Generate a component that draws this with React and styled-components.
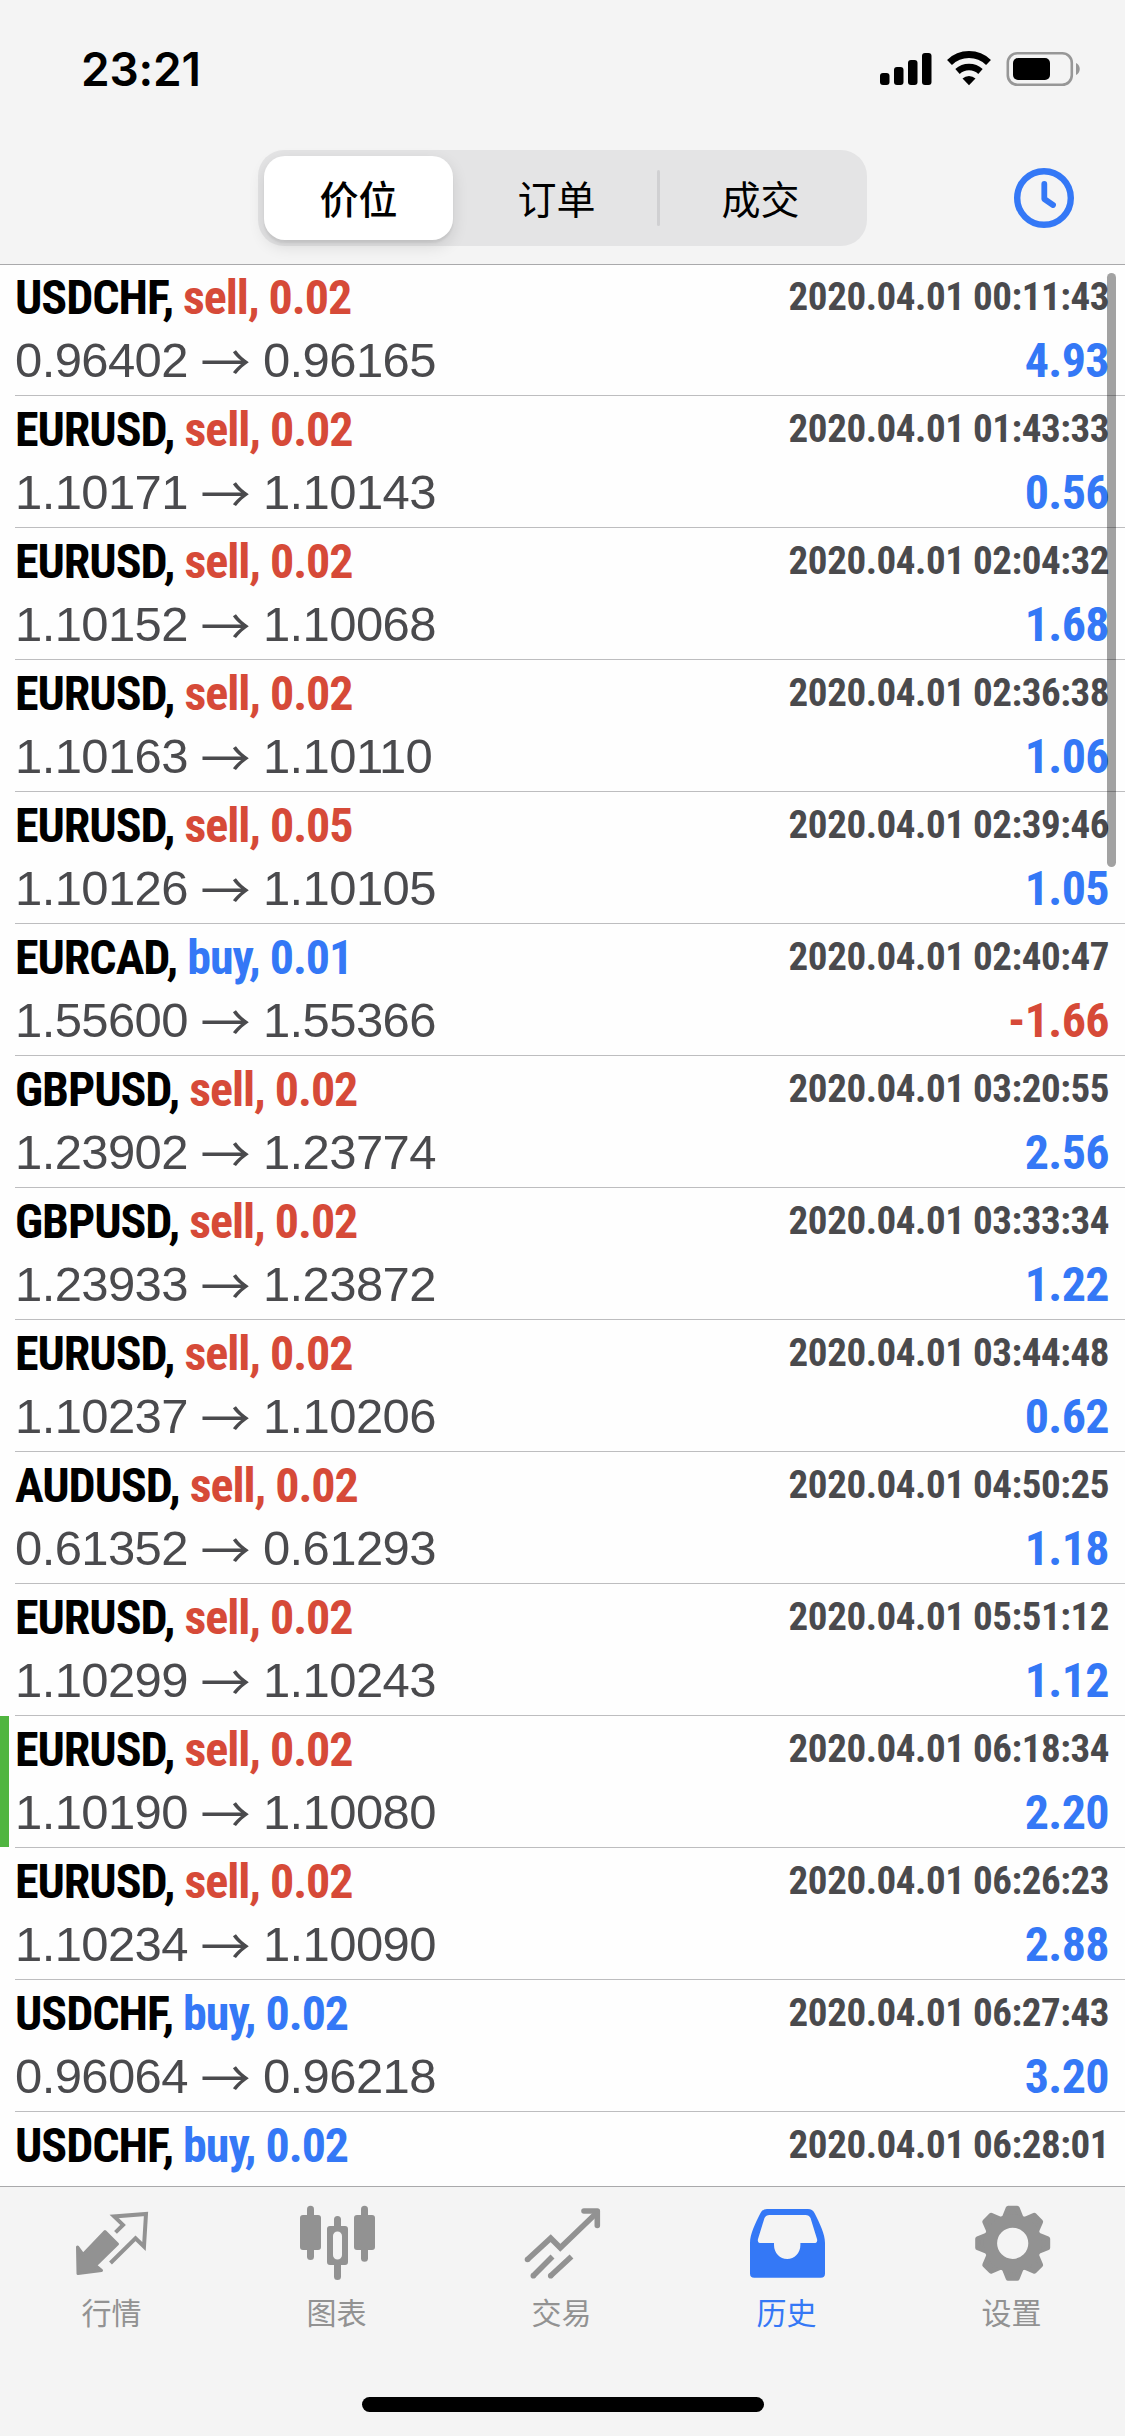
import React, { useState } from "react";
import styled, { createGlobalStyle } from "styled-components";

const BLUE = "#3478f6";
const RED = "#d64a38";
const GREY = "#929292";

const GlobalStyle = createGlobalStyle`
* { box-sizing: border-box; }
body {
  margin: 0;
  background: #fff;
  font-family: "Liberation Sans", "Noto Sans CJK SC", sans-serif;
}
`;

const Screen = styled.div`
  position: relative;
  display: flex;
  flex-direction: column;
  width: 1125px;
  height: 2436px;
  overflow: hidden;
  background: #fefefe;
`;

const Header = styled.header`
  flex: none;
  height: 265px;
  background: #f4f4f4;
  border-bottom: 1px solid #a9a9ab;
`;

const StatusBar = styled.div`
  display: flex;
  justify-content: space-between;
  align-items: center;
  height: 138px;
  padding: 0 43px 0 81px;
`;

const Clock = styled.div`
  font-family: Inter, sans-serif;
  font-size: 46px;
  font-weight: 600;
  line-height: 46px;
  letter-spacing: -0.2px;
`;

const NavBar = styled.div`
  display: flex;
  align-items: center;
  justify-content: flex-end;
  gap: 144px;
  height: 120px;
  padding-right: 48px;
`;

const Segments = styled.div`
  display: flex;
  align-items: center;
  width: 609px;
  height: 96px;
  padding: 0 6px;
  border-radius: 26px;
  background: #e4e4e5;
`;

const Segment = styled.button`
  width: ${(p) => (p.$active ? 189 : 204)}px;
  flex: ${(p) => (p.$active ? "none" : 1)};
  height: 84px;
  padding: 0 0 3px;
  border: 0;
  border-radius: 21px;
  background: ${(p) => (p.$active ? "#fff" : "transparent")};
  box-shadow: ${(p) => (p.$active ? "0 6px 16px rgba(0, 0, 0, 0.12), 0 3px 2px rgba(0, 0, 0, 0.06)" : "none")};
  color: #000;
  font-family: "Noto Sans CJK SC", sans-serif;
  font-size: 39px;
  font-weight: ${(p) => (p.$active ? 500 : 400)};
  line-height: 60px;
`;

const Divider = styled.span`
  width: 3px;
  height: 56px;
  border-radius: 2px;
  background: ${(p) => (p.$hidden ? "transparent" : "#d0d0d2")};
`;

const List = styled.main`
  flex: 1;
  min-height: 0;
  overflow: hidden;
`;

const Row = styled.div`
  display: flex;
  height: 132px;

  &:first-child {
    height: 131px;
  }
`;

const Marker = styled.div`
  flex: none;
  width: 9px;
  height: 131px;
  margin-right: 6px;
  background: ${(p) => (p.$on ? "#50b540" : "transparent")};
`;

const RowBody = styled.div`
  flex: 1;
  display: flex;
  flex-direction: column;
  justify-content: flex-end;
  padding: 0 16px 3px 0;
  border-bottom: 1px solid #bdbdbf;
`;

const Line = styled.div`
  display: flex;
  justify-content: space-between;
  align-items: center;
  height: 63px;
  white-space: nowrap;
`;

const Symbol = styled.div`
  font-family: "Roboto Condensed", Roboto, sans-serif;
  font-size: 48px;
  font-weight: 700;
  line-height: 63px;
  letter-spacing: -1.05px;
  color: #000;
`;

const Side = styled.span`
  color: ${(p) => (p.$side === "buy" ? BLUE : RED)};
`;

const Time = styled.div`
  font-family: "Roboto Condensed", Roboto, sans-serif;
  font-size: 39px;
  font-weight: 700;
  line-height: 63px;
  letter-spacing: -0.45px;
  color: #4a4a4d;
`;

const Prices = styled.div`
  display: flex;
  align-items: center;
  font-size: 49px;
  line-height: 63px;
  letter-spacing: -0.6px;
  color: #4a4a4d;
`;

const Arrow = styled.span`
  width: 75px;
  padding-bottom: 4px;
  text-align: center;
  letter-spacing: 0;
  font-family: "Noto Sans CJK SC", sans-serif;
  font-size: 50px;
  line-height: 56px;
`;

const Profit = styled.div`
  font-family: "Roboto Condensed", Roboto, sans-serif;
  font-size: 48px;
  font-weight: 700;
  line-height: 63px;
  letter-spacing: -0.6px;
  color: ${(p) => (p.$loss ? RED : BLUE)};
`;

const ScrollThumb = styled.div`
  position: absolute;
  top: 273px;
  right: 9px;
  width: 9px;
  height: 594px;
  border-radius: 5px;
  background: rgba(0, 0, 0, 0.36);
`;

const TabBar = styled.nav`
  flex: none;
  height: 250px;
  border-top: 1px solid #a9a9ab;
  background: #f4f4f4;
`;

const Tabs = styled.div`
  display: flex;
  width: 1125px;
  height: 210px;
  padding-top: 16px;
  margin-left: -1px;
`;

const Tab = styled.button`
  flex: 1;
  display: flex;
  flex-direction: column;
  align-items: center;
  padding: 0;
  border: 0;
  background: none;
  color: ${(p) => (p.$active ? BLUE : GREY)};
  font-family: "Noto Sans CJK SC", sans-serif;
  font-size: 30px;
  line-height: 40px;

  svg {
    margin-bottom: 8px;
  }
`;

const HomeIndicator = styled.div`
  width: 402px;
  height: 15px;
  margin: 0 auto;
  border-radius: 8px;
  background: #000;
`;

const StatusIcons = () => (
  <svg width="204" height="40" viewBox="880 49 204 40">
    <rect x="882" y="73" width="9.5" height="12" rx="3" />
    <rect x="896" y="67" width="9.5" height="18" rx="3" />
    <rect x="910" y="60" width="9.5" height="25" rx="3" />
    <rect x="924" y="53" width="9.5" height="32" rx="3" />
    <path d="M951.5 62.5a28 28 0 0 1 39 0" fill="none" stroke="#000" strokeWidth="7" />
    <path d="M959.5 71.5a17 17 0 0 1 23 0" fill="none" stroke="#000" strokeWidth="6.5" />
    <path d="M964.5 78.5a9.5 9.5 0 0 1 13 0L971 85.2z" />
    <rect x="1009.8" y="53.2" width="64" height="31.6" rx="9.5" fill="none" stroke="#979797" strokeWidth="2.6" />
    <rect x="1015" y="58" width="37" height="22" rx="5" />
    <path d="M1078 63c5 2 5 10 0 12z" fill="#979797" />
  </svg>
);

const HistoryClock = () => (
  <svg width="66" height="66" viewBox="0 0 66 66" fill="none" stroke={BLUE} strokeLinecap="round" strokeLinejoin="round">
    <circle cx="33" cy="33" r="26.8" strokeWidth="6.4" />
    <path d="M33.3 19v15l8.7 6" strokeWidth="5.8" />
  </svg>
);

const QuotesIcon = () => (
  <svg width="80" height="80" viewBox="0 0 80 80" stroke="currentColor" strokeLinejoin="round" strokeLinecap="round">
    <path d="M33 28.5l12.5 12.5-22 21.5 6 5L6 70.5 5.5 44l5.5 7.5z" fill="currentColor" strokeWidth="3" />
    <path d="M43.5 29.3l7.5-7.4-8.8-8.4L74 11l-2 32.5-8.5-8.2L38.5 60" fill="none" strokeWidth="4" strokeLinejoin="miter" strokeLinecap="butt" />
  </svg>
);

const ChartIcon = () => (
  <svg width="80" height="80" viewBox="0 0 80 80" fill="currentColor">
    <rect x="10" y="2.7" width="7" height="54.3" rx="3.5" />
    <rect x="3" y="12" width="21" height="35" rx="3" />
    <rect x="64" y="2.7" width="7" height="56" rx="3.5" />
    <rect x="57" y="12" width="21" height="35" rx="3" />
    <path
      fillRule="evenodd"
      d="M33 23h4v-6.500a3.500 3.500 0 0 1 7 0V23h4a3 3 0 0 1 3 3v33a3 3 0 0 1-3 3h-4v11.500a3.500 3.500 0 0 1-7 0V62h-4a3 3 0 0 1-3-3V26a3 3 0 0 1 3-3zM40.500 28.500a4.500 4.500 0 0 0-4.500 4.500v19a4.500 4.500 0 0 0 9 0V33a4.500 4.500 0 0 0-4.500-4.500z"
    />
  </svg>
);

const TradeIcon = () => (
  <svg width="80" height="80" viewBox="0 0 80 80" fill="none" stroke="currentColor" strokeWidth="5.6">
    <path d="M5.500 56.500L28.700 35.200l9.600 9.600L75 9.500" />
    <path d="M62 8h13.300v14.500" strokeLinecap="round" strokeLinejoin="round" />
    <path d="M11.300 72.700L30.500 53.500M28.700 72.700L49.500 53.500" />
    <g fill="currentColor" stroke="none">
      <circle cx="5.500" cy="56.500" r="2.800" />
      <circle cx="11.300" cy="72.700" r="2.800" />
      <circle cx="28.700" cy="72.700" r="2.800" />
    </g>
  </svg>
);

const HistoryIcon = () => (
  <svg width="80" height="80" viewBox="0 0 80 80" fill="currentColor">
    <path
      fillRule="evenodd"
      d="M20 6h41q4.500 0 6.500 4C73 21 78 31 78 40v30.500q0 4.300-4.300 4.300H7.300Q3 74.800 3 70.500V40C3 31 8 21 13.500 10q2-4 6.500-4zM22.500 12q-3.500 0-5 3L11 36q-1 4 3 4h13v2c0 8 6 14 13.200 14s13.200-6 13.200-14v-2H67q4 0 3-4l-6.500-21q-1.500-3-5-3z"
    />
  </svg>
);

const SettingsIcon = () => (
  <svg width="80" height="80" viewBox="-40.700 -40.300 80 80">
    <g fill="currentColor" stroke="currentColor" strokeWidth="5" strokeLinejoin="round">
      {[0, 45, 90, 135, 180, 225, 270, 315].map((deg) => (
        <path key={deg} transform={`rotate(${deg})`} d="M-8.500-25L-4.500-35h9L8.500-25z" />
      ))}
    </g>
    <circle r="22.300" fill="none" stroke="currentColor" strokeWidth="13.400" />
  </svg>
);

const segments = ["价位", "订单", "成交"];

const tabs = [
  { label: "行情", Icon: QuotesIcon },
  { label: "图表", Icon: ChartIcon },
  { label: "交易", Icon: TradeIcon },
  { label: "历史", Icon: HistoryIcon },
  { label: "设置", Icon: SettingsIcon },
];

const deals = [
  ["USDCHF", "sell", "0.02", "0.96402", "0.96165", "00:11:43", "4.93"],
  ["EURUSD", "sell", "0.02", "1.10171", "1.10143", "01:43:33", "0.56"],
  ["EURUSD", "sell", "0.02", "1.10152", "1.10068", "02:04:32", "1.68"],
  ["EURUSD", "sell", "0.02", "1.10163", "1.10110", "02:36:38", "1.06"],
  ["EURUSD", "sell", "0.05", "1.10126", "1.10105", "02:39:46", "1.05"],
  ["EURCAD", "buy", "0.01", "1.55600", "1.55366", "02:40:47", "-1.66"],
  ["GBPUSD", "sell", "0.02", "1.23902", "1.23774", "03:20:55", "2.56"],
  ["GBPUSD", "sell", "0.02", "1.23933", "1.23872", "03:33:34", "1.22"],
  ["EURUSD", "sell", "0.02", "1.10237", "1.10206", "03:44:48", "0.62"],
  ["AUDUSD", "sell", "0.02", "0.61352", "0.61293", "04:50:25", "1.18"],
  ["EURUSD", "sell", "0.02", "1.10299", "1.10243", "05:51:12", "1.12"],
  ["EURUSD", "sell", "0.02", "1.10190", "1.10080", "06:18:34", "2.20", true],
  ["EURUSD", "sell", "0.02", "1.10234", "1.10090", "06:26:23", "2.88"],
  ["USDCHF", "buy", "0.02", "0.96064", "0.96218", "06:27:43", "3.20"],
  ["USDCHF", "buy", "0.02", "", "", "06:28:01", ""],
];

function Deal({ deal }) {
  const [symbol, side, volume, open, close, time, profit, marked] = deal;

  return (
    <Row>
      <Marker $on={marked} />
      <RowBody>
        <Line>
          <Symbol>
            {symbol}, <Side $side={side}>{side}, {volume}</Side>
          </Symbol>
          <Time>2020.04.01 {time}</Time>
        </Line>
        <Line>
          {open && (
            <>
              <Prices>
                {open}
                <Arrow>→</Arrow>
                {close}
              </Prices>
              <Profit $loss={profit.startsWith("-")}>{profit}</Profit>
            </>
          )}
        </Line>
      </RowBody>
    </Row>
  );
}

function App() {
  const [segment, setSegment] = useState(0);
  const [tab, setTab] = useState(3);

  return (
    <>
      <GlobalStyle />
      <Screen>
        <Header>
          <StatusBar>
            <Clock>23:21</Clock>
            <StatusIcons />
          </StatusBar>
          <NavBar>
            <Segments>
              {segments.map((label, i) => (
                <React.Fragment key={label}>
                  {i > 0 && <Divider $hidden={segment === i || segment === i - 1} />}
                  <Segment $active={segment === i} onClick={() => setSegment(i)}>
                    {label}
                  </Segment>
                </React.Fragment>
              ))}
            </Segments>
            <HistoryClock />
          </NavBar>
        </Header>
        <List>
          {deals.map((deal) => (
            <Deal key={deal[5]} deal={deal} />
          ))}
        </List>
        <ScrollThumb />
        <TabBar>
          <Tabs>
            {tabs.map(({ label, Icon }, i) => (
              <Tab key={label} $active={tab === i} onClick={() => setTab(i)}>
                <Icon />
                {label}
              </Tab>
            ))}
          </Tabs>
          <HomeIndicator />
        </TabBar>
      </Screen>
    </>
  );
}

export default App;
